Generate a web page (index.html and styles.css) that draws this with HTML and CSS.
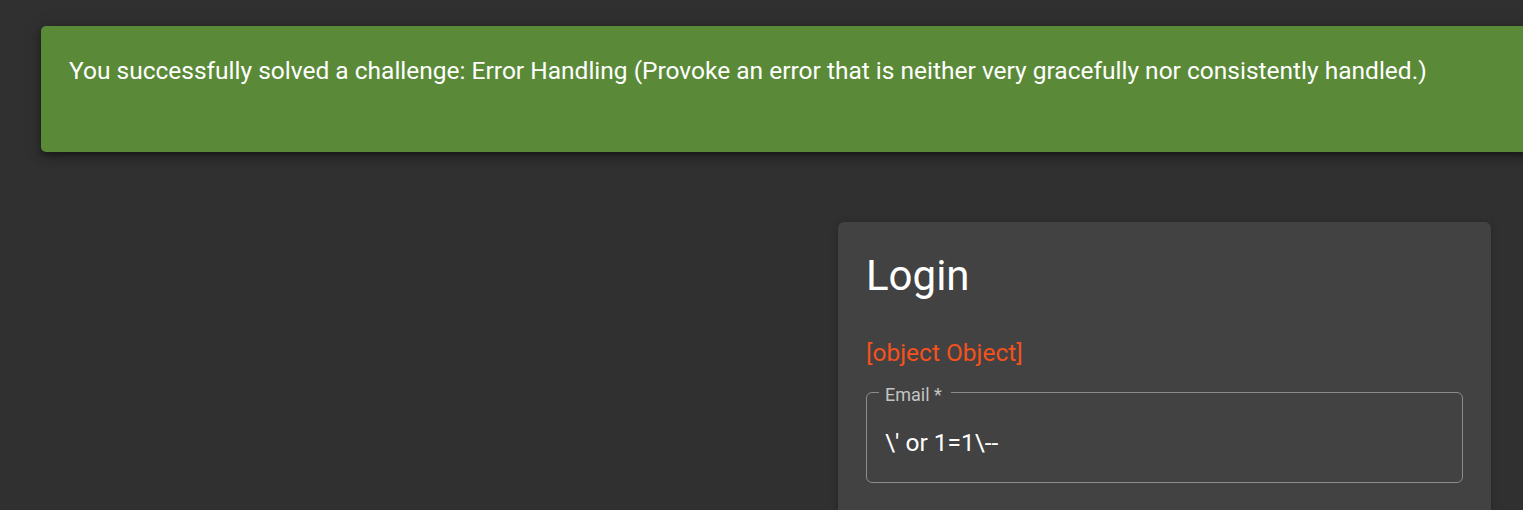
FILE: index.html
```html
<!DOCTYPE html>
<html>
<head>
<meta charset="utf-8">
<link rel="stylesheet" href="styles.css">
</head>
<body>
<div class="page">
  <div class="snackbar">
    <span class="snack-text">You successfully solved a challenge: Error Handling (Provoke an error that is neither very gracefully nor consistently handled.)</span>
  </div>
  <div class="card-row">
    <div class="card">
      <h1 class="title">Login</h1>
      <div class="error">[object Object]</div>
      <fieldset class="field">
        <legend class="label"><span class="label-text">Email *</span></legend>
        <div class="value">\' or 1=1\--</div>
      </fieldset>
    </div>
  </div>
</div>
</body>
</html>
```
FILE: styles.css
```css
html, body {
  margin: 0;
  padding: 0;
  background: #303030;
  overflow: hidden;
  height: 510px;
}
body {
  font-family: Roboto, "Noto Sans", sans-serif;
  color: #ffffff;
}
.page {
  padding-top: 26px;
  width: 1523px;
}
.snackbar {
  margin-left: 41px;
  width: 1500px;
  height: 126px;
  box-sizing: border-box;
  background: #5a8a38;
  border-radius: 5px;
  padding: 29px 28px 0 28px;
  box-shadow: 0 3px 5px -1px rgba(0,0,0,0.3), 0 6px 10px 0 rgba(0,0,0,0.2), 0 1px 18px 0 rgba(0,0,0,0.18);
}
.snack-text {
  font-size: 24.5px;
  line-height: 32px;
  color: #ffffff;
  white-space: nowrap;
}
.card-row {
  padding-top: 70px;
  padding-left: 838px;
}
.card {
  width: 653px;
  height: 320px;
  box-sizing: border-box;
  background: #424242;
  border-radius: 6px;
  padding: 26px 28px 0 28px;
  box-shadow: 0 2px 1px -1px rgba(0,0,0,0.2), 0 1px 1px 0 rgba(0,0,0,0.14), 0 1px 8px 0 rgba(0,0,0,0.2);
}
.title {
  margin: 0;
  font-size: 42px;
  font-weight: 400;
  line-height: 56px;
}
.error {
  margin-top: 34px;
  font-size: 24.5px;
  line-height: 30px;
  color: #f4511e;
}
.field {
  margin: 15px 0 0 0;
  padding: 0 12px 0 12px;
  height: 100px;
  box-sizing: border-box;
  border: 1px solid #8c8c8c;
  border-radius: 6px;
  width: 597px;
}
.label {
  padding: 0 9px 0 6px;
  font-size: 18px;
  line-height: 18px;
  color: #c4c4c4;
}
.label-text {
  position: relative;
  top: 3px;
}
.value {
  margin-top: 28px;
  padding-left: 6px;
  font-size: 24.5px;
  line-height: 28px;
  color: #ffffff;
}
```
